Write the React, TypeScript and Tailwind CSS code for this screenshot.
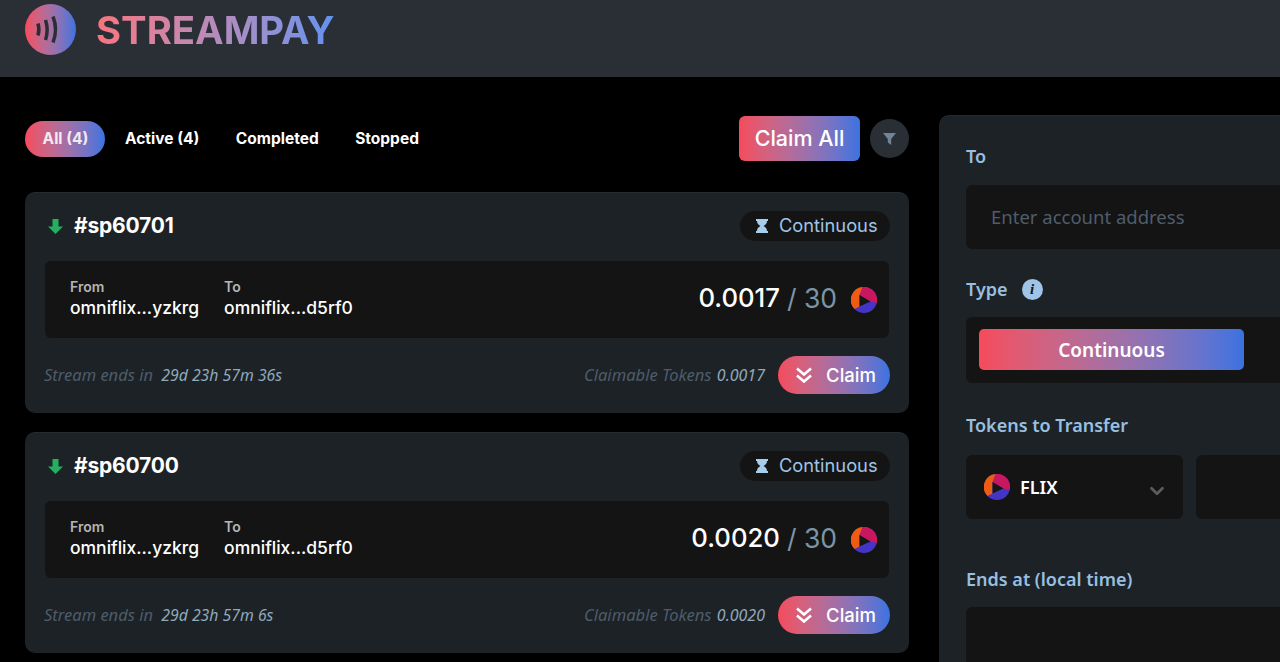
import { ChevronDown } from 'lucide-react'

const brand = 'bg-gradient-to-r from-[#f64a5b] to-[#3a72e0]'

function FlixIcon({ size = 26 }: { size?: number }) {
  return (
    <svg width={size} height={size} viewBox="0 0 26 26" className="shrink-0">
      <circle cx="13" cy="13" r="13" fill="#4535c4" />
      <path d="M11.500 0A13 13 0 0 1 25.700 16L19.500 14.500 8.500 8z" fill="#c9175f" />
      <path d="M11.500 0A13 13 0 0 0 3.500 22L8.500 19.500V8z" fill="#ee5c14" />
      <path d="M8.500 8 19.500 14.500 8.500 19.500z" fill="#161616" />
    </svg>
  )
}

function Logo() {
  return (
    <div className={`size-[51px] rounded-full ${brand}`}>
      <svg width="51" height="51" viewBox="0 0 51 51" fill="none" stroke="#2a2e35" strokeWidth="3.500">
        <path d="M13 19.500c1.200 4 1.200 8 0 12" />
        <path d="M20.500 16c2 6 2 14 0 20" />
        <path d="M28 12.500c3.300 8.500 3.300 17.500 0 26" />
      </svg>
    </div>
  )
}

type Stream = { id: string; amount: string; ends: string }

const streams: Stream[] = [
  { id: '#sp60701', amount: '0.0017', ends: '29d 23h 57m 36s' },
  { id: '#sp60700', amount: '0.0020', ends: '29d 23h 57m 6s' },
]

function StreamCard({ id, amount, ends }: Stream) {
  return (
    <div className="rounded-[10px] border-t border-[#262b30] bg-[#1d2226] px-5 pt-[18px] pb-[19px]">
      <div className="flex h-[30px] items-center justify-between">
        <div className="flex items-center gap-[11px] pl-[3px]">
          <svg width="15" height="15" viewBox="0 0 15 15" fill="#27ae60">
            <path d="M4.500 0h6v7.500h4.500L7.500 15 0 7.500h4.500z" />
          </svg>
          <span className="text-[21px] font-bold tracking-[-0.2px] text-white">{id}</span>
        </div>
        <div className="-mr-px flex h-[30px] w-[150px] items-center gap-[11px] rounded-full bg-[#141414] pl-4">
          <svg width="12" height="14" viewBox="0 0 12 14" fill="#a8cdec">
            <path d="M0 0h12v2h-1c0 3-2 4-3.500 5 1.500 1 3.500 2 3.500 5h1v2H0v-2h1c0-3 2-4 3.500-5C3 6 1 5 1 2H0z" />
          </svg>
          <span className="text-[18.3px] text-[#9fc5e8]">Continuous</span>
        </div>
      </div>
      <div className="mt-[20px] flex h-[77px] items-center justify-between rounded-[6px] bg-[#141414] pr-3 pl-[25px]">
        <div className="flex gap-[25px]">
          <div>
            <p className="-mt-px text-[14px] leading-[16px] font-semibold text-[#b5b5b5]">From</p>
            <p className="text-[17.5px] leading-[25px] font-medium text-white">omniflix...yzkrg</p>
          </div>
          <div>
            <p className="-mt-px text-[14px] leading-[16px] font-semibold text-[#b5b5b5]">To</p>
            <p className="text-[17.5px] leading-[25px] font-medium text-white">omniflix...d5rf0</p>
          </div>
        </div>
        <div className="flex items-center">
          <span className="-mt-[2px] text-[25.7px] font-medium text-white">{amount}</span>
          <span className="-mt-[2px] ml-[7px] text-[26.5px] text-[#7b95a8]">/ 30</span>
          <span className="ml-[14px]"><FlixIcon /></span>
        </div>
      </div>
      <div className="mt-[18px] flex h-[38px] items-center justify-between">
        <p className="-ml-px font-['Noto_Sans'] text-[16.5px] text-[#4d5c6b] italic">
          Stream ends in <span className="ml-[4px] text-[15.8px] text-[#8fa9bd]">{ends}</span>
        </p>
        <div className="-mr-px flex items-center gap-[13px]">
          <p className="font-['Noto_Sans'] text-[16.6px] text-[#4d5c6b] italic">
            Claimable Tokens <span className="ml-px text-[16px] text-[#8fa9bd]">{amount}</span>
          </p>
          <button className={`flex h-[38px] w-[112px] items-center justify-center gap-[14px] rounded-full pl-1 ${brand}`}>
            <svg width="16" height="17" viewBox="0 0 16 17" fill="none" stroke="white" strokeWidth="2.600">
              <path d="M1 1.500 8 7.500 15 1.500" />
              <path d="M1 8.500 8 14.500 15 8.500" />
            </svg>
            <span className="pt-px text-[18.500px] font-medium text-white">Claim</span>
          </button>
        </div>
      </div>
    </div>
  )
}

function Label({ children }: { children: React.ReactNode }) {
  return <p className="font-['Noto_Sans'] text-[18px] leading-[26px] font-semibold text-[#97bfe0]">{children}</p>
}

export default function App() {
  return (
    <div className="h-[662px] w-[1280px] overflow-hidden bg-black font-['Inter',sans-serif]">
      <header className="flex h-[77px] items-start gap-5 bg-[#2a2e35] pt-1 pl-[25px]">
        <Logo />
        <h1 className="bg-gradient-to-r from-[#f8747f] to-[#5f93f0] bg-clip-text pt-[1px] text-[38.300px] leading-[50px] font-bold text-transparent">
          STREAMPAY
        </h1>
      </header>
      <main className="flex gap-[30px] pt-[39px] pl-[25px]">
        <section className="w-[884px] shrink-0">
          <div className="flex h-[45px] items-center justify-between">
            <nav className="flex items-center gap-[36.500px] text-[15.5px] font-bold text-white">
              <span className={`flex h-[36px] w-[80px] items-center justify-center rounded-full pl-px ${brand} text-[#f1eaf0]`}>All (4)</span>
              <span className="-ml-[16.500px]">Active (4)</span>
              <span>Completed</span>
              <span>Stopped</span>
            </nav>
            <div className="flex items-center gap-[10px]">
              <button className={`flex h-[45px] w-[121px] items-center justify-center rounded-[6px] ${brand} text-[21.5px] font-medium text-white`}>
                Claim All
              </button>
              <span className="flex size-[39px] items-center justify-center rounded-full bg-[#2a2e35]">
                <svg width="13" height="12" viewBox="0 0 13 12" fill="#6f8496">
                  <path d="M0 0h13L8.200 6v6L4.800 9.500V6z" />
                </svg>
              </span>
            </div>
          </div>
          <div className="mt-[31px] flex flex-col gap-[19px]">
            {streams.map((s) => (
              <StreamCard key={s.id} {...s} />
            ))}
          </div>
        </section>
        <aside className="-mt-px h-[600px] w-[500px] shrink-0 rounded-[10px] border-t border-[#262b30] bg-[#1d2226] px-[27px] pt-[27px] font-['Noto_Sans',sans-serif]">
          <Label>To</Label>
          <div className="mt-[16px] flex h-[64px] items-center rounded-[6px] bg-[#141414] pl-[25px] text-[18.500px] text-[#4f5d6b]">
            Enter account address
          </div>
          <div className="mt-[22px] flex h-[36px] items-center gap-[14px]">
            <Label>Type</Label>
            <span className="flex size-[21px] items-center justify-center rounded-full bg-[#a0c4e8] font-['Liberation_Serif'] text-[15px] font-bold text-[#141414] italic">i</span>
          </div>
          <div className="mt-[10px] h-[66px] rounded-[6px] bg-[#141414] px-[13px] pt-[12px]">
            <div className={`flex h-[41px] w-[265px] items-center justify-center rounded-[5px] pt-px ${brand} text-[19px] font-semibold text-white`}>
              Continuous
            </div>
          </div>
          <div className="mt-[29px]"><Label>Tokens to Transfer</Label></div>
          <div className="mt-[17px] flex gap-[13px]">
            <div className="flex h-[64px] w-[217px] items-center rounded-[6px] bg-[#141414] pr-[15px] pl-[18px]">
              <FlixIcon />
              <span className="ml-[10px] pt-px text-[18px] font-semibold text-white">FLIX</span>
              <ChevronDown size={22} strokeWidth={3} className="mt-[7px] ml-auto text-[#5c5c5c]" />
            </div>
            <div className="h-[64px] flex-1 rounded-[6px] bg-[#141414]" />
          </div>
          <div className="mt-[47px]"><Label>Ends at (local time)</Label></div>
          <div className="mt-[15px] h-[64px] rounded-[6px] bg-[#141414]" />
        </aside>
      </main>
    </div>
  )
}
